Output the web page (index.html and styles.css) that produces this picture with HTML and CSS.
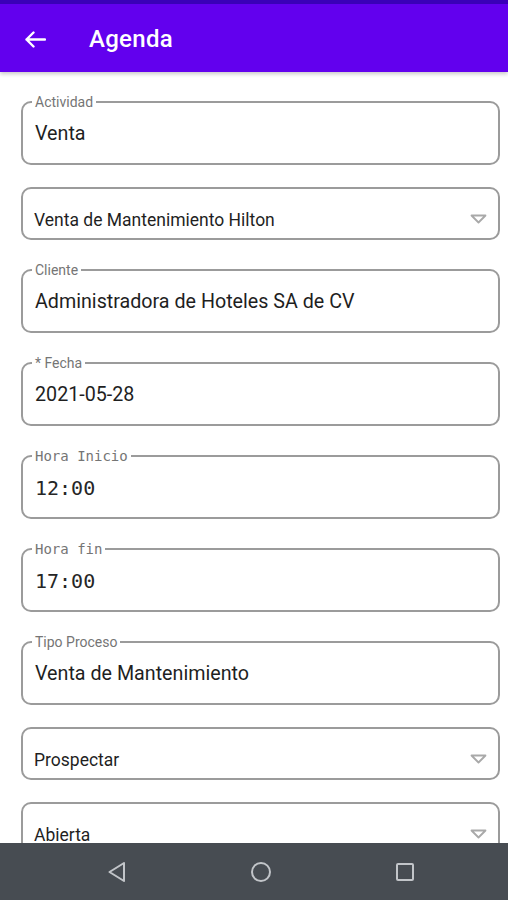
FILE: index.html
```html
<!DOCTYPE html>
<html lang="es">
<head>
<meta charset="utf-8">
<title>Agenda</title>
<link rel="stylesheet" href="styles.css">
</head>
<body>
<div class="screen">
  <header class="appbar">
    <div class="status"></div>
    <div class="toolbar">
      <svg class="back" width="22" height="17" viewBox="0 0 22 17" aria-hidden="true">
        <path d="M21 8.5H2.5 M9.5 1.5L2.5 8.5L9.5 15.5" fill="none" stroke="#fff" stroke-width="2.4" stroke-linecap="round" stroke-linejoin="round"/>
      </svg>
      <h1 class="title">Agenda</h1>
    </div>
  </header>

  <main class="form">
    <div class="field">
      <span class="label">Actividad</span>
      <span class="value">Venta</span>
    </div>

    <div class="select">
      <span class="select-text">Venta de Mantenimiento Hilton</span>
      <svg class="caret" width="17" height="10" viewBox="0 0 17 10" aria-hidden="true"><path d="M1.5 1.5H15.5L8.5 8.5Z" fill="none" stroke="#a9a9a9" stroke-width="1.8" stroke-linejoin="round"/></svg>
    </div>

    <div class="field">
      <span class="label">Cliente</span>
      <span class="value">Administradora de Hoteles SA de CV</span>
    </div>

    <div class="field">
      <span class="label">* Fecha</span>
      <span class="value">2021-05-28</span>
    </div>

    <div class="field mono">
      <span class="label">Hora Inicio</span>
      <span class="value">12:00</span>
    </div>

    <div class="field mono">
      <span class="label">Hora fin</span>
      <span class="value">17:00</span>
    </div>

    <div class="field">
      <span class="label">Tipo Proceso</span>
      <span class="value">Venta de Mantenimiento</span>
    </div>

    <div class="select">
      <span class="select-text">Prospectar</span>
      <svg class="caret" width="17" height="10" viewBox="0 0 17 10" aria-hidden="true"><path d="M1.5 1.5H15.5L8.5 8.5Z" fill="none" stroke="#a9a9a9" stroke-width="1.8" stroke-linejoin="round"/></svg>
    </div>

    <div class="select">
      <span class="select-text">Abierta</span>
      <svg class="caret" width="17" height="10" viewBox="0 0 17 10" aria-hidden="true"><path d="M1.5 1.5H15.5L8.5 8.5Z" fill="none" stroke="#a9a9a9" stroke-width="1.8" stroke-linejoin="round"/></svg>
    </div>
  </main>

  <nav class="navbar">
    <div class="nav-item">
      <svg width="20" height="22" viewBox="0 0 20 22" aria-hidden="true"><path d="M17 2L2.5 11L17 20Z" fill="none" stroke="#c2c5c9" stroke-width="2" stroke-linejoin="round"/></svg>
    </div>
    <div class="nav-item">
      <svg width="22" height="22" viewBox="0 0 22 22" aria-hidden="true"><circle cx="11" cy="11" r="9" fill="none" stroke="#c2c5c9" stroke-width="2"/></svg>
    </div>
    <div class="nav-item">
      <svg width="20" height="20" viewBox="0 0 20 20" aria-hidden="true"><rect x="2" y="2" width="16" height="16" rx="1" fill="none" stroke="#c2c5c9" stroke-width="2"/></svg>
    </div>
  </nav>
</div>
</body>
</html>
```

FILE: styles.css
```css
* { box-sizing: border-box; }

html, body {
  margin: 0;
  padding: 0;
  background: #ffffff;
}

.screen {
  width: 508px;
  height: 900px;
  display: flex;
  flex-direction: column;
  overflow: hidden;
  font-family: Roboto, "Noto Sans", "Liberation Sans", sans-serif;
}

.appbar {
  position: relative;
  z-index: 2;
  flex: none;
  box-shadow: 0 2px 4px rgba(0, 0, 0, 0.22);
}

.status {
  height: 4px;
  background: #3a00b8;
}

.toolbar {
  height: 68px;
  background: #6200ee;
  display: flex;
  align-items: center;
  padding-left: 24px;
}

.back {
  display: block;
  margin-top: 3px;
}

.title {
  margin: 0 0 0 43px;
  color: #ffffff;
  font-size: 24px;
  font-weight: 500;
  letter-spacing: 0.3px;
  line-height: 28px;
  margin-top: 2px;
}

.form {
  flex: 1;
  min-height: 0;
  overflow: hidden;
  display: flex;
  flex-direction: column;
  gap: 22px;
  padding: 22px 8px 0 21px;
}

.field {
  position: relative;
  flex: none;
  height: 64px;
  margin-top: 7px;
  border: 2px solid #9b9b9b;
  border-radius: 10px;
  display: flex;
  align-items: center;
  padding: 2px 12px 0 12px;
}

.label {
  position: absolute;
  top: -9px;
  left: 9px;
  padding: 0 3px;
  background: #ffffff;
  color: #757575;
  font-size: 14px;
  line-height: 16px;
}

.value {
  color: #1f1f1f;
  font-size: 19.7px;
  line-height: 24px;
  white-space: nowrap;
}

.mono .label {
  font-family: "DejaVu Sans Mono", "Liberation Mono", monospace;
  font-size: 14px;
  line-height: 16px;
  top: -9px;
}

.mono .value {
  font-family: "DejaVu Sans Mono", "Liberation Mono", monospace;
  font-size: 20px;
  line-height: 24px;
  color: #262626;
}

.select {
  flex: none;
  height: 53px;
  border: 2px solid #9b9b9b;
  border-radius: 10px;
  display: flex;
  align-items: center;
  justify-content: space-between;
  padding: 13px 11px 0 11px;
}

.select-text {
  color: #1f1f1f;
  font-size: 17.5px;
  line-height: 21px;
}

.caret {
  display: block;
  margin-top: -2px;
}

.navbar {
  flex: none;
  height: 57px;
  background: #474c52;
  display: grid;
  grid-template-columns: repeat(3, 144px);
  padding-left: 45px;
  align-items: center;
  position: relative;
  z-index: 2;
}

.nav-item {
  display: flex;
  justify-content: center;
  align-items: center;
}

.nav-item svg {
  display: block;
}
```
